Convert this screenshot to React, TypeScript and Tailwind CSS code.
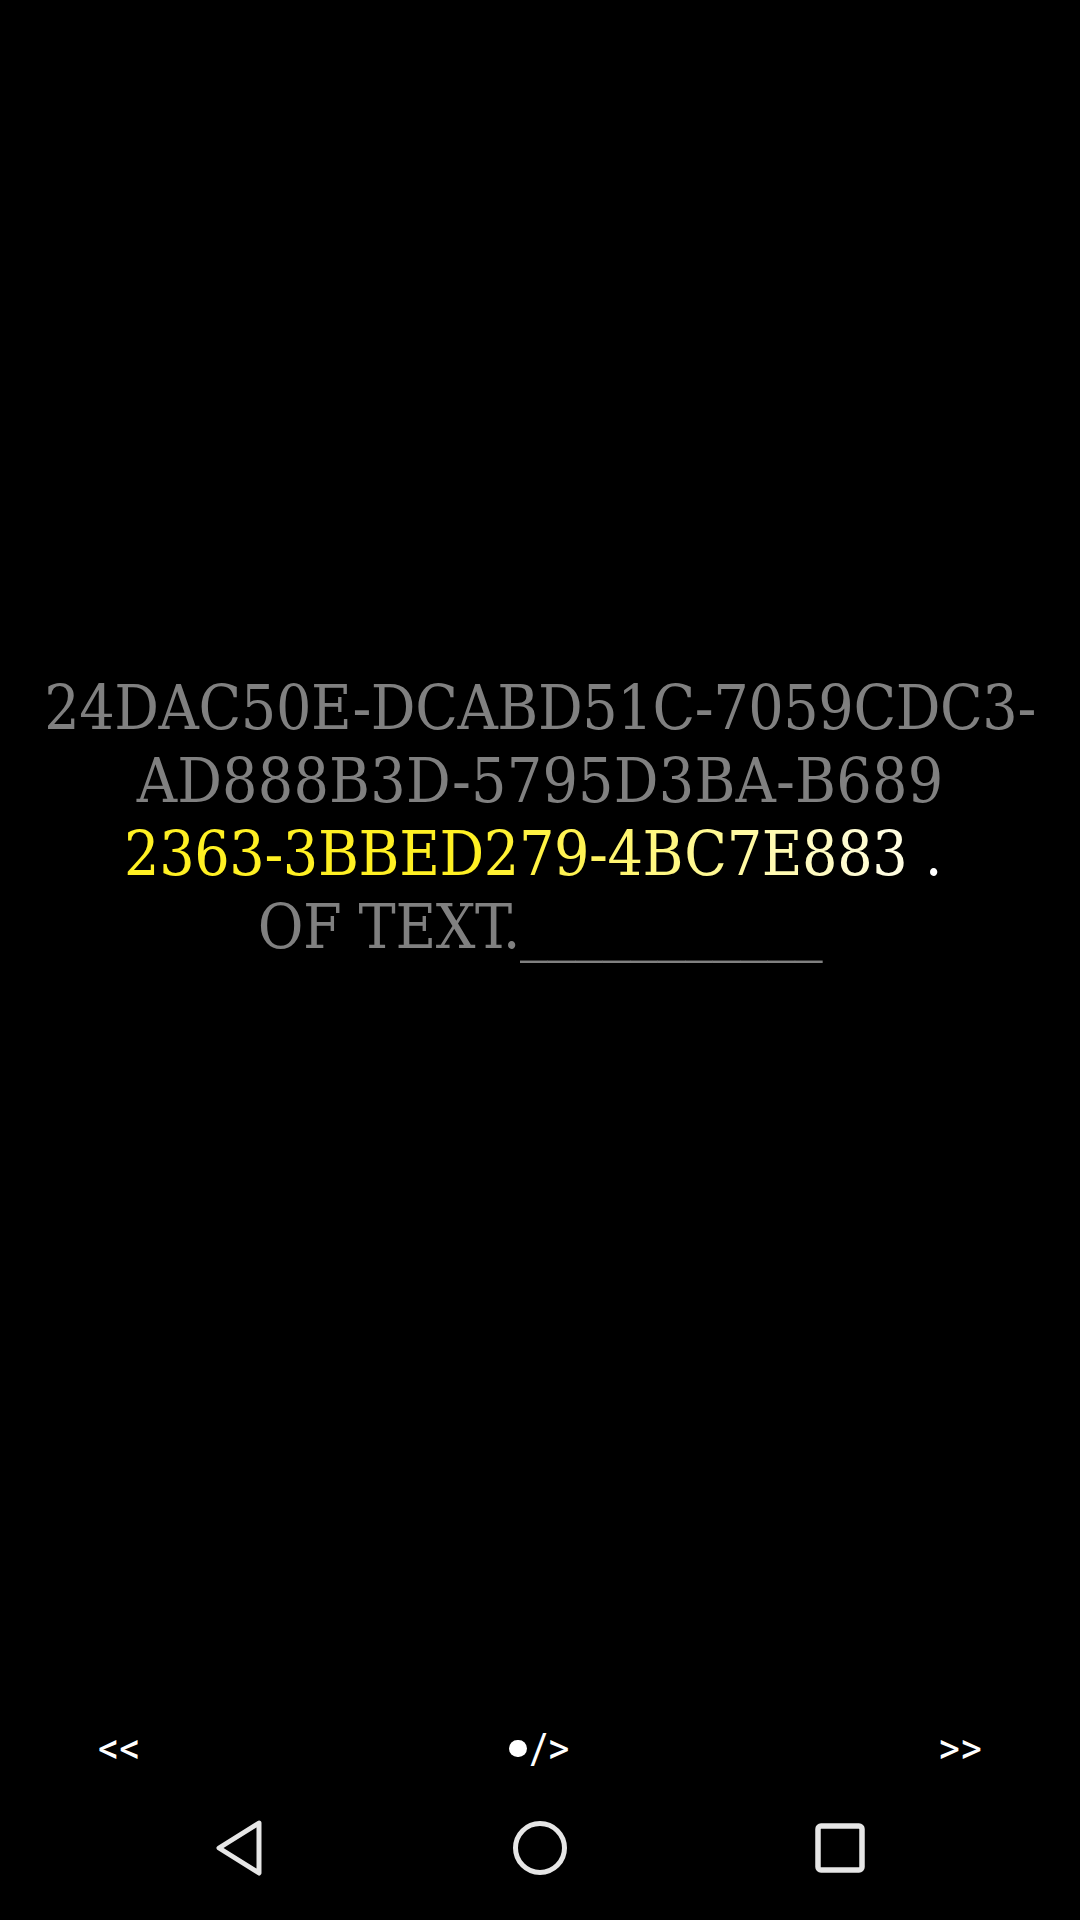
import React from "react";

const yellowLine = "2363-3BBED279-4BC7E883";

function lerp(a: number, b: number, t: number) {
  return Math.round(a + (b - a) * t);
}

function charColor(i: number) {
  const start = 9;
  const end = yellowLine.length - 1;
  if (i <= start) return "rgb(255,240,35)";
  const t = Math.min(1, (i - start) / (end - start));
  return `rgb(255,${lerp(240, 253, t)},${lerp(35, 225, t)})`;
}

export default function App() {
  return (
    <div className="w-[1080px] h-[1920px] bg-black flex flex-col overflow-hidden">
      <div
        className="h-[1720px] pt-[671px] flex flex-col items-center text-[62px] leading-[73px] tracking-[-0.4px] text-[#808080]"
        style={{ fontFamily: '"DejaVu Serif", serif', fontStretch: "condensed" }}
      >
        <div className="whitespace-nowrap">24DAC50E-DCABD51C-7059CDC3-</div>
        <div className="whitespace-nowrap tracking-[0.2px]">AD888B3D-5795D3BA-B689</div>
        <div className="whitespace-nowrap pr-[14px]">
          {yellowLine.split("").map((c, i) => (
            <span key={i} style={{ color: charColor(i) }}>
              {c}
            </span>
          ))}
          <span className="text-white"> .</span>
        </div>
        <div className="whitespace-nowrap">OF TEXT.___________</div>
      </div>
      <div
        className="h-[56px] flex items-center justify-between px-[98px] text-white text-[42px]"
        style={{ fontFamily: "Roboto, sans-serif" }}
      >
        <span>&lt;&lt;</span>
        <span className="flex items-center">
          <span className="inline-block w-[18px] h-[17px] rounded-full bg-white mr-[3px]"></span>
          <span>/&gt;</span>
        </span>
        <span>&gt;&gt;</span>
      </div>
      <div className="h-[144px] flex items-center justify-center gap-[240px]">
        <div className="w-[60px] h-[60px] flex items-center justify-center">
          <svg width="52" height="58" viewBox="0 0 52 58">
            <path
              d="M45 4 L5 29 L45 54 Z"
              fill="none"
              stroke="#e6e6e6"
              strokeWidth="5"
              strokeLinejoin="round"
            />
          </svg>
        </div>
        <div className="w-[60px] h-[60px] flex items-center justify-center">
          <svg width="60" height="60" viewBox="0 0 60 60">
            <circle cx="30" cy="30" r="24.5" fill="none" stroke="#e6e6e6" strokeWidth="5" />
          </svg>
        </div>
        <div className="w-[60px] h-[60px] flex items-center justify-center">
          <svg width="60" height="60" viewBox="0 0 60 60">
            <rect x="8" y="8" width="44" height="44" rx="3" fill="none" stroke="#e6e6e6" strokeWidth="5.5" />
          </svg>
        </div>
      </div>
    </div>
  );
}
